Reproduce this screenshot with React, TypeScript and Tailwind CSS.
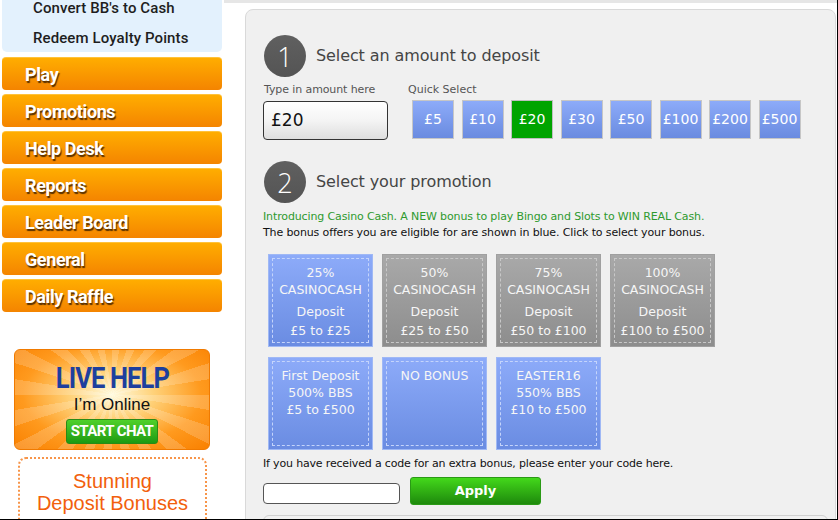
import React from "react";

const menu = ["Play", "Promotions", "Help Desk", "Reports", "Leader Board", "General", "Daily Raffle"];
const amounts = ["£5", "£10", "£20", "£30", "£50", "£100", "£200", "£500"];

type Tile = { lines: string[]; grey?: boolean; casino?: boolean };
const row1: Tile[] = [
  { lines: ["25%", "CASINOCASH", "Deposit", "£5 to £25"], casino: true },
  { lines: ["50%", "CASINOCASH", "Deposit", "£25 to £50"], casino: true, grey: true },
  { lines: ["75%", "CASINOCASH", "Deposit", "£50 to £100"], casino: true, grey: true },
  { lines: ["100%", "CASINOCASH", "Deposit", "£100 to £500"], casino: true, grey: true },
];
const row2: Tile[] = [
  { lines: ["First Deposit", "500% BBS", "£5 to £500"] },
  { lines: ["NO BONUS"] },
  { lines: ["EASTER16", "550% BBS", "£10 to £500"] },
];

function PromoTile({ t }: { t: Tile }) {
  return (
    <div
      className={
        "w-[105px] h-[93px] p-[3px] border " +
        (t.grey
          ? "bg-gradient-to-b from-[#a9a9a9] to-[#8d8d8d] border-[#a0a0a0]"
          : "bg-gradient-to-b from-[#8dabf9] to-[#6a8ce2] border-[#9fb8f5]")
      }
    >
      <div
        className={
          "h-full w-full border border-dashed flex flex-col items-center text-center text-[12.5px] text-[#f6f6f6] " +
          (t.grey ? "border-[#c8c8c8]" : "border-[#c4d4fb]")
        }
      >
        {t.casino ? (
          <>
            <div className="mt-[5px] leading-[17px]">{t.lines[0]}</div>
            <div className="leading-[17px]">{t.lines[1]}</div>
            <div className="mt-[5px] leading-[17px]">{t.lines[2]}</div>
            <div className="mt-[2px] leading-[17px]">{t.lines[3]}</div>
          </>
        ) : (
          <div className="mt-[5px]">
            {t.lines.map((l) => (
              <div key={l} className="leading-[17px]">{l}</div>
            ))}
          </div>
        )}
      </div>
    </div>
  );
}

function StepCircle({ n }: { n: string }) {
  return (
    <div className="w-[42px] h-[42px] shrink-0 rounded-full bg-gradient-to-b from-[#606060] to-[#545454] flex items-center justify-center text-white text-[27px] font-light leading-none [font-family:'Open_Sans',sans-serif]">
      {n}
    </div>
  );
}

export default function App() {
  return (
    <div className="w-[838px] h-[520px] overflow-hidden bg-white flex border-r border-b border-black [font-family:'DejaVu_Sans',Verdana,sans-serif]">
      {/* Sidebar */}
      <div className="w-[224px] shrink-0 flex flex-col pl-[2px] pr-[2px]">
        <div className="shrink-0 bg-[#e3f1fd] rounded-b-[5px] h-[52px] pl-[31px] text-[#1e1e1e] text-[15px] font-medium [font-family:Roboto,sans-serif] tracking-[0.1px]">
          <div className="h-[20px] leading-[17px]">Convert BB's to Cash</div>
          <div className="h-[29px] leading-[37px]">Redeem Loyalty Points</div>
        </div>
        <div className="shrink-0 mt-[5px] flex flex-col gap-[4px]">
          {menu.map((m) => (
            <div
              key={m}
              className="shrink-0 h-[33px] rounded-[4px] bg-gradient-to-b from-[#ffad00] to-[#f48400] border-t border-[#ffc23a] flex items-center pl-[23px] text-white text-[18px] font-bold tracking-[-0.4px] [font-family:Roboto,sans-serif] [text-shadow:1px_2px_1px_rgba(60,30,0,0.85)]"
            >
              {m}
            </div>
          ))}
        </div>
        {/* Live help */}
        <div className="shrink-0 mt-[37px] ml-[12px] w-[196px] h-[101px] rounded-[6px] relative overflow-hidden border border-[#f07a00] bg-[radial-gradient(ellipse_at_50%_45%,#fffbe0_0%,#ffd27a_30%,#ff9a1e_65%,#f98000_100%)]">
          <div className="absolute inset-0 bg-[repeating-conic-gradient(from_0deg_at_50%_45%,rgba(255,255,255,0.18)_0deg_9deg,rgba(255,255,255,0)_9deg_18deg)]" />
          <div className="relative flex flex-col items-center">
            <div className="mt-[13px] text-[#1d3f9e] text-[29px] font-bold leading-[30px] tracking-[-1px] [font-family:Roboto,sans-serif] scale-x-[0.88]">
              LIVE HELP
            </div>
            <div className="mt-[1px] text-[#111] text-[17px] leading-[22px] [font-family:'Liberation_Sans',Arial,sans-serif]">
              I’m Online
            </div>
            <div className="mt-[3px] w-[92px] h-[25px] rounded-[3px] bg-gradient-to-b from-[#4fd12b] to-[#1c9a12] border border-[#2a8a16] flex items-center justify-center text-white text-[15px] font-bold tracking-[-0.6px] [font-family:Roboto,sans-serif]">
              START CHAT
            </div>
          </div>
        </div>
        <div className="shrink-0 mt-[7px] ml-[16px] w-[189px] h-[80px] rounded-[8px] border-2 border-dotted border-[#f7954a] flex flex-col items-center pt-[11px] text-[#f2600c] text-[20px] leading-[22px] [font-family:'Liberation_Sans',Arial,sans-serif]">
          <div>Stunning</div>
          <div>Deposit Bonuses</div>
        </div>
      </div>

      {/* Main */}
      <div className="flex-1 border-t-[3px] border-[#e6e6e6] pl-[21px] pr-[1px]">
        <div className="mt-[6px] h-[560px] rounded-[8px] border border-[#d9d9d9] bg-[#f0f0f0] pl-[17px] pr-[6px] pt-[25px]">
          {/* Step 1 */}
          <div className="flex items-center gap-[10px] ml-[1px]">
            <StepCircle n="1" />
            <div className="text-[16px] text-[#454545] tracking-[-0.1px]">Select an amount to deposit</div>
          </div>
          <div className="flex mt-[6px]">
            <div className="w-[145px]">
              <div className="text-[11px] text-[#555] leading-[14px] ml-[1px] tracking-[-0.1px]">Type in amount here</div>
              <div className="mt-[4px] w-[125px] h-[39px] rounded-[4px] border border-[#333] bg-gradient-to-b from-white via-[#f4f4f4] to-[#dedede] flex items-center pl-[7px] text-[17px] text-[#111]">
                £20
              </div>
            </div>
            <div>
              <div className="text-[11px] text-[#555] leading-[14px]">Quick Select</div>
              <div className="mt-[3px] flex gap-[7.5px] ml-[4px]">
                {amounts.map((a) => (
                  <div
                    key={a}
                    className={
                      "w-[42px] h-[39px] border flex items-center justify-center text-white text-[14px] " +
                      (a === "£20"
                        ? "bg-[#00a400] border-[#bfbfbf]"
                        : "bg-gradient-to-b from-[#8dabf9] to-[#6a8be0] border-[#c6c6c6]")
                    }
                  >
                    {a}
                  </div>
                ))}
              </div>
            </div>
          </div>

          {/* Step 2 */}
          <div className="flex items-center gap-[10px] mt-[21px] ml-[1px]">
            <StepCircle n="2" />
            <div className="text-[16px] text-[#454545] tracking-[-0.1px]">Select your promotion</div>
          </div>
          <div className="mt-[6px] text-[11px] leading-[16px] tracking-[-0.13px]">
            <div className="text-[#2e9a2e]">Introducing Casino Cash. A NEW bonus to play Bingo and Slots to WIN REAL Cash.</div>
            <div className="text-[#111]">The bonus offers you are eligible for are shown in blue. Click to select your bonus.</div>
          </div>
          <div className="ml-[5px] mt-[13px] flex flex-col gap-[10px]">
            <div className="flex gap-[9px]">
              {row1.map((t, i) => (
                <PromoTile key={i} t={t} />
              ))}
            </div>
            <div className="flex gap-[9px]">
              {row2.map((t, i) => (
                <PromoTile key={i} t={t} />
              ))}
            </div>
          </div>
          <div className="mt-[7px] text-[11px] leading-[14px] text-[#111] tracking-[-0.17px]">
            If you have received a code for an extra bonus, please enter your code here.
          </div>
          <div className="mt-[6px] flex items-end gap-[10px]">
            <div className="w-[137px] h-[21px] rounded-[4px] border border-[#555] bg-white mb-[1px]" />
            <div className="w-[131px] h-[28px] rounded-[3px] bg-gradient-to-b from-[#43d81b] to-[#1e8a0c] border border-[#2a9a15] flex items-center justify-center text-white text-[13px] font-bold">
              Apply
            </div>
          </div>
          <div className="mt-[10px] mr-[1px] h-[40px] rounded-t-[6px] border border-[#d0d0d0] bg-[#f0f0f0]" />
        </div>
      </div>
    </div>
  );
}
